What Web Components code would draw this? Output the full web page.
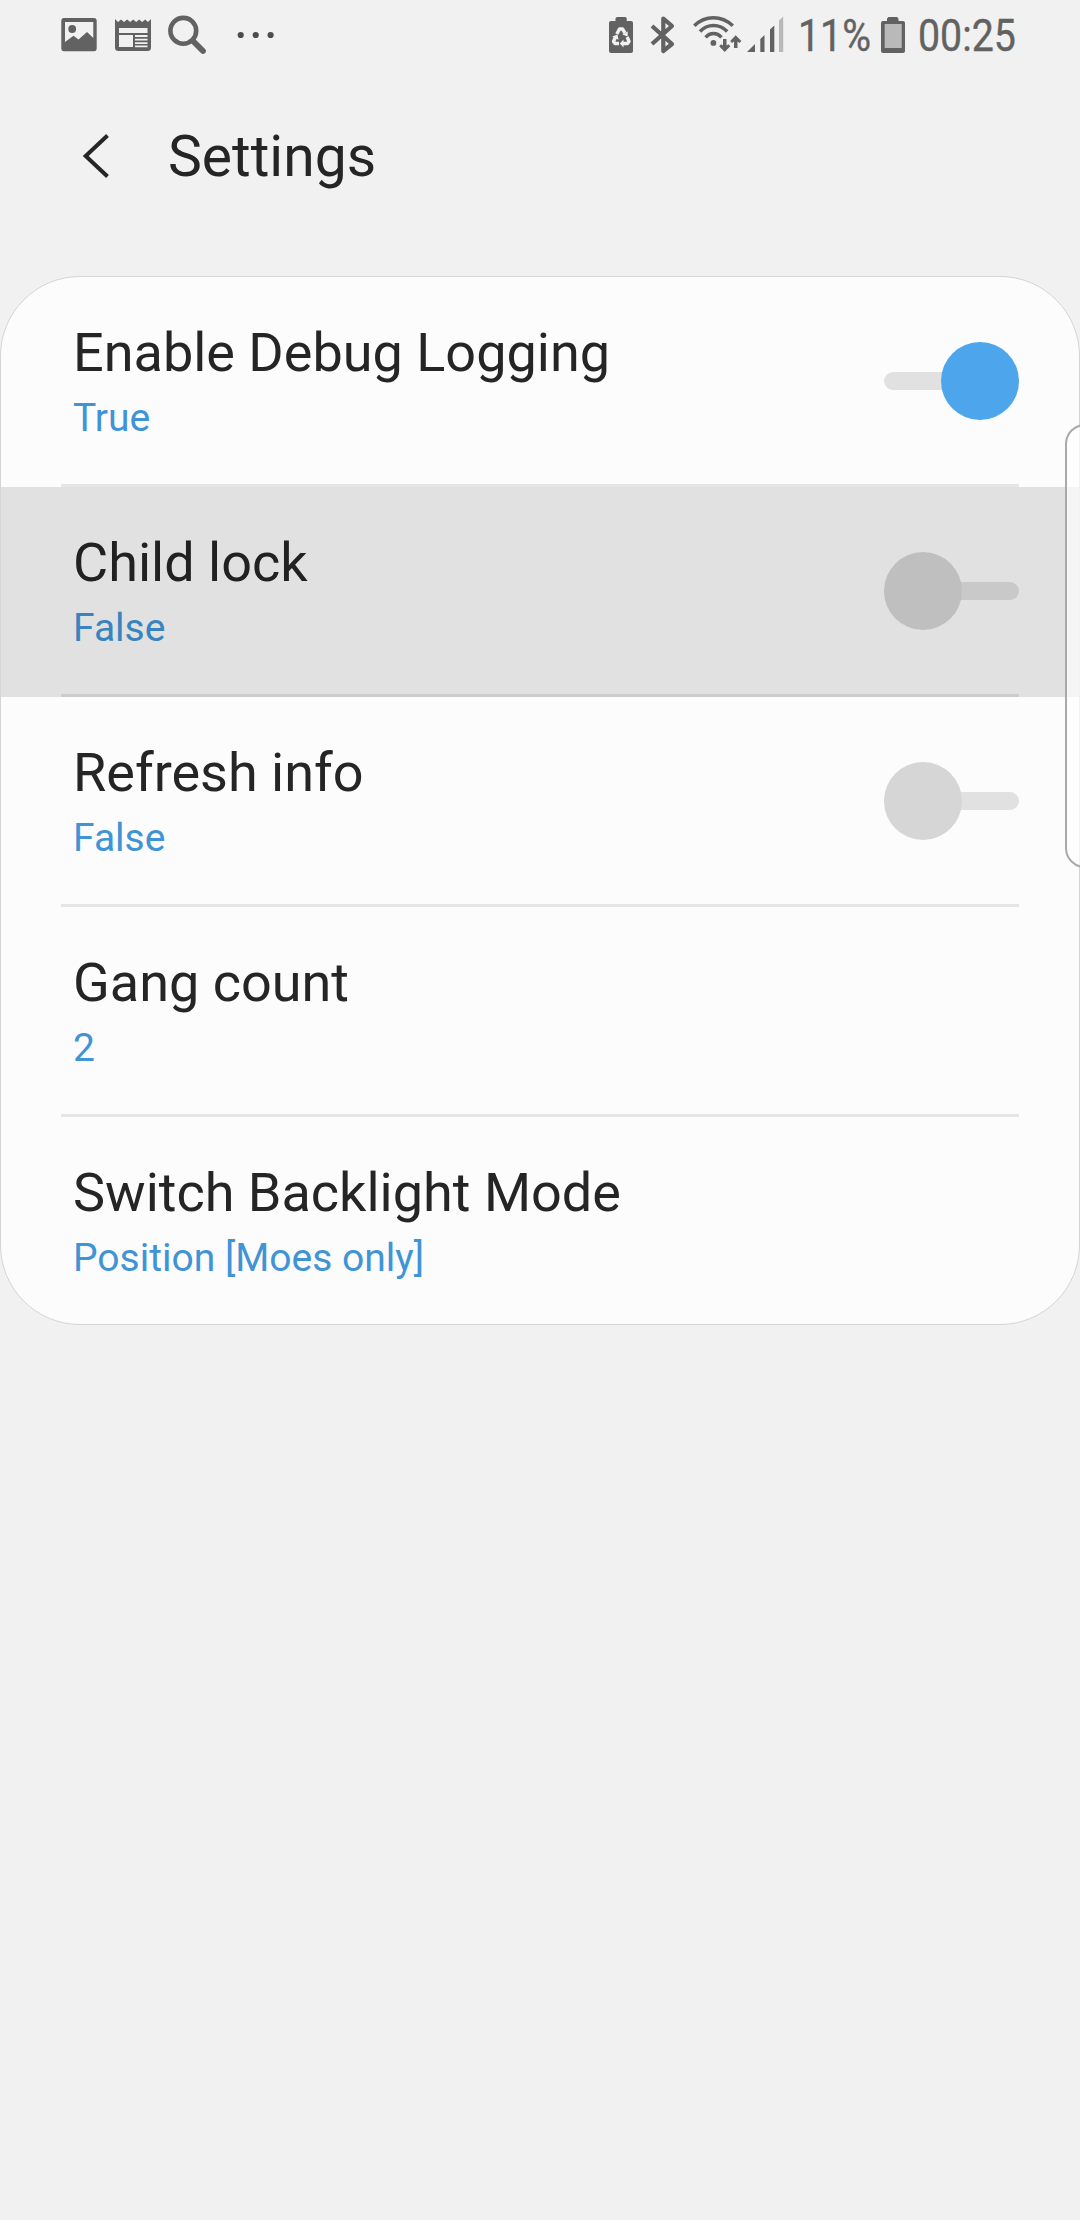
<!DOCTYPE html>
<html lang="en">
<head>
<meta charset="utf-8">
<title>Settings</title>
<style>
html,body{margin:0;padding:0;background:#f1f1f1}
body{width:1080px;height:2220px;overflow:hidden;font-family:Roboto,"Liberation Sans",sans-serif;color:#252525}
</style>
</head>
<body>
<settings-app></settings-app>
<script>
class BaseEl extends HTMLElement{
  constructor(){super();this.attachShadow({mode:'open'});}
  connectedCallback(){this.shadowRoot.innerHTML='<style>'+this.css()+'</style>'+this.html();}
}
customElements.define('status-bar',class extends BaseEl{
  css(){return `
    :host{display:flex;justify-content:space-between;height:70px;padding:0 62px 0 58px;box-sizing:border-box;color:#626262;--ink:#626262}
    .group{display:flex;align-items:flex-start}
    svg{display:block;height:70px;flex:none;fill:var(--ink)}
    .t{flex:none;height:70px;line-height:72px;font-size:45px;white-space:nowrap;-webkit-text-stroke:.4px #626262}
    .t span{display:inline-block;transform-origin:0 50%;transform:scaleX(.873)}
    .pct{width:79px}.clk{width:100px;margin-left:2px}`;}
  html(){return `
  <div class="group">
    <svg width="52" viewBox="58 0 52 70"><path fill-rule="evenodd" d="M64 18H94Q96.700 18 96.700 21V48.300Q96.700 51.300 94 51.300H64Q61.300 51.300 61.300 48.300V21Q61.300 18 64 18ZM65 22V42L73.500 35.700L78.500 39.500L87 32L93.300 38V22Z"/><circle cx="72.200" cy="29" r="3.900"/></svg>
    <svg width="54" viewBox="110 0 54 70"><path fill-rule="evenodd" d="M115 19L118 22L121 19.500L124 22L127.200 19.500L130.200 22L133.200 19.500L136.200 22L139.200 19.500L142.200 22L145.200 19.500L148 22L151 19V47.500Q151 51 147.500 51H118.500Q115 51 115 47.500ZM119 28V33H147.500V28ZM119 35V47H133V35ZM135 35V37H147.500V35ZM135 38.700V40.500H147.500V38.700ZM135 42.200V44H147.500V42.200ZM135 45.500V47.200H147.500V45.500Z"/></svg>
    <svg width="60" viewBox="164 0 60 70"><circle cx="183.300" cy="30.800" r="12.900" fill="none" stroke="#626262" stroke-width="4.600"/><path d="M193 41L203 51" fill="none" stroke="#626262" stroke-width="5.800" stroke-linecap="round"/></svg>
    <svg width="60" viewBox="224 0 60 70" style="fill:#4d4d4d"><circle cx="240.700" cy="35" r="3.100"/><circle cx="255.700" cy="35" r="3.100"/><circle cx="270.600" cy="35" r="3.100"/></svg>
  </div>
  <div class="group">
    <svg width="40" viewBox="602 0 40 70"><path d="M617 17H625.500L626.700 18V21H631Q633 21 633 23V51Q633 53 631 53H611Q609 53 609 51V23Q609 21 611 21H615.500V18Z"/><g fill="none" stroke="#f1f1f1" stroke-width="3.400" stroke-linejoin="round"><path d="M616.800 34L619.500 29H622.500L625 33"/><path d="M615.500 37L613.500 41.500L615 43.500H619"/><path d="M627.200 37L629 41.500L627.500 43.500H622.500"/></g><path fill="#f1f1f1" d="M622.300 34.500L627.700 31.500V36.500ZM612.300 36.500L617.500 34.500L618.500 39.800ZM623.500 39.500V47.500L619.800 43.500Z"/></svg>
    <svg width="46" viewBox="642 0 46 70"><path d="M652 26L672 44L663.300 51V18.500L672 26L652 44" fill="none" stroke="#626262" stroke-width="4.200" stroke-linejoin="round"/></svg>
    <svg width="56" viewBox="688 0 56 70"><g fill="none" stroke="#626262" stroke-width="3.500"><path d="M694.300 25.700Q702.500 17.700 713.400 17.700T732.800 25.700"/><path d="M700 31.500Q705.500 25.500 713.500 25.500T727.200 31.500"/><path d="M705.600 37.400Q709 33.600 713.500 33.600T721.500 37.400"/></g><circle cx="713.400" cy="42.900" r="2.900"/><path d="M723 39H726.500V45.500L728.500 44.200L730.300 46.200L724.700 52L719.200 46.200L721 44.200L723 45.500ZM734 48V41.500L732 43L730.200 41L735.700 35.200L741.300 41L739.500 43L737.500 41.500V48Z"/></svg>
    <svg width="54" viewBox="744 0 54 70"><path d="M747 52L755 44V52ZM760.300 52V39L764.500 35V52ZM770 52V29.500L774.300 25.500V52Z"/><path fill="#b9b9b9" d="M779 52V20.500L783.200 16.500V52Z"/></svg>
    <div class="t pct"><span>11%</span></div>
    <svg width="39" viewBox="877 0 39 70"><path d="M888.500 17H897L898.500 18.500V21H903Q905 21 905 23V51Q905 53 903 53H883Q881 53 881 51V23Q881 21 883 21H887V18.500Z"/><path fill="#b9b9b9" d="M884.700 24H901.700V48H884.700Z"/></svg>
    <div class="t clk"><span>00:25</span></div>
  </div>`;}
});
customElements.define('page-header',class extends BaseEl{
  css(){return `:host{display:flex;align-items:center;height:172px;padding-left:78px;box-sizing:border-box}
   svg{display:block;margin-right:58px}h1{margin:0;padding-top:2px;font-weight:400;font-size:57px;line-height:68px}`;}
  html(){return `<svg width="32" height="172" viewBox="78 70 32 172"><path d="M107.500 135.500L85.700 156L107.500 176.500" fill="none" stroke="#252525" stroke-width="4"/></svg><h1><slot></slot></h1>`;}
});
customElements.define('toggle-switch',class extends BaseEl{
  css(){return `:host{display:flex;align-items:center;width:135px;height:78px}
   .track{display:flex;align-items:center;width:135px;height:18px;border-radius:9px;background:#e1e1e1}
   .knob{flex:none;width:78px;height:78px;border-radius:50%;background:#d6d6d6}
   :host([on]) .track{justify-content:flex-end}:host([on]) .knob{background:#4da6ec}`;}
  html(){return `<div class="track"><div class="knob"></div></div>`;}
});
customElements.define('setting-row',class extends BaseEl{
  css(){return `:host{display:flex;flex-direction:column;height:210px;position:relative}
   .main{display:flex;height:207px;justify-content:space-between;padding:0 60px 0 72px}
   .text{padding-top:44px}
   .title{font-size:54px;line-height:64px;height:64px;white-space:nowrap}
   .sub{font-size:39px;line-height:46px;margin-top:10px;color:#4094d6;white-space:nowrap}
   toggle-switch{margin-top:65px}
   .line{height:3px;margin:0 60px;background:#e5e5e5}
   :host([last]){height:207px}:host([last]) .line{display:none}
   :host([pressed])::after{content:"";position:absolute;inset:0;background:rgba(0,0,0,.107)}`;}
  html(){const s=this.getAttribute('toggle');
   return `<div class="main"><div class="text"><div class="title">${this.getAttribute('label')}</div><div class="sub">${this.getAttribute('value')}</div></div>${s?`<toggle-switch ${s==='on'?'on':''}></toggle-switch>`:''}</div><div class="line"></div>`;}
});
customElements.define('settings-card',class extends BaseEl{
  css(){return `:host{display:block;margin-top:34px;border:1px solid #d5d5d5;border-radius:80px;background:#fcfcfc;overflow:hidden}`;}
  html(){return `<slot></slot>`;}
});
customElements.define('edge-handle',class extends BaseEl{
  css(){return `:host{display:block;position:absolute;left:1065px;top:424px;width:40px;height:444px;box-sizing:border-box;border:2px solid #a9a9a9;border-radius:20px;background:rgba(255,255,255,.68);background-clip:padding-box}`;}
  html(){return '';}
});
customElements.define('settings-app',class extends BaseEl{
  css(){return `:host{display:block;position:relative;width:1080px;height:2220px;overflow:hidden;background:#f1f1f1}`;}
  html(){return `<status-bar></status-bar><page-header>Settings</page-header>
   <settings-card>
    <setting-row label="Enable Debug Logging" value="True" toggle="on"></setting-row>
    <setting-row label="Child lock" value="False" toggle="off" pressed></setting-row>
    <setting-row label="Refresh info" value="False" toggle="off"></setting-row>
    <setting-row label="Gang count" value="2"></setting-row>
    <setting-row label="Switch Backlight Mode" value="Position [Moes only]" last></setting-row>
   </settings-card><edge-handle></edge-handle>`;}
});
</script>
</body>
</html>
